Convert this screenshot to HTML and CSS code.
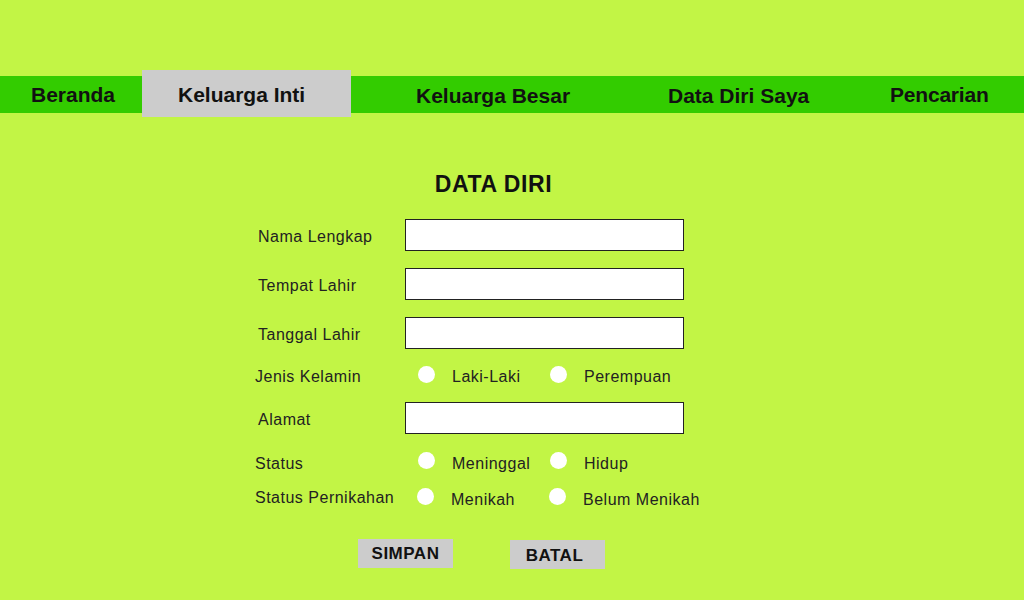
FILE: index.html
```html
<!DOCTYPE html>
<html lang="id">
<head>
<meta charset="utf-8">
<title>Data Diri</title>
<link rel="stylesheet" href="styles.css">
</head>
<body>
<header class="top">
  <nav class="nav">
    <a class="nav-item nav-beranda">Beranda</a>
    <a class="nav-item nav-inti">Keluarga Inti</a>
    <a class="nav-item nav-besar">Keluarga Besar</a>
    <a class="nav-item nav-data">Data Diri Saya</a>
    <a class="nav-item nav-cari">Pencarian</a>
  </nav>
</header>
<main class="main">
  <form class="form">
    <h1 class="title">DATA DIRI</h1>

    <div class="row row-first">
      <label class="label-in">Nama Lengkap</label>
      <input class="field" type="text">
    </div>
    <div class="row">
      <label class="label-in">Tempat Lahir</label>
      <input class="field" type="text">
    </div>
    <div class="row">
      <label class="label-in">Tanggal Lahir</label>
      <input class="field" type="text">
    </div>

    <div class="row">
      <span class="label-r">Jenis Kelamin</span>
      <label class="opt"><input class="radio" type="radio" name="jk"><span class="opt-text">Laki-Laki</span></label>
      <label class="opt"><input class="radio" type="radio" name="jk"><span class="opt-text">Perempuan</span></label>
    </div>

    <div class="row row-alamat">
      <label class="label-in">Alamat</label>
      <input class="field" type="text">
    </div>

    <div class="row row-status">
      <span class="label-r label-status">Status</span>
      <label class="opt"><input class="radio" type="radio" name="st"><span class="opt-text opt-status">Meninggal</span></label>
      <label class="opt"><input class="radio" type="radio" name="st"><span class="opt-text opt-status">Hidup</span></label>
    </div>

    <div class="row row-nikah">
      <span class="label-r label-nikah">Status Pernikahan</span>
      <label class="opt"><input class="radio" type="radio" name="nk"><span class="opt-text opt-low">Menikah</span></label>
      <label class="opt"><input class="radio" type="radio" name="nk"><span class="opt-text opt-low">Belum Menikah</span></label>
    </div>

    <div class="actions">
      <button class="btn" type="button">SIMPAN</button>
      <button class="btn btn-batal" type="button">BATAL</button>
    </div>
  </form>
</main>
</body>
</html>
```
FILE: styles.css
```css
html, body {
  margin: 0;
  padding: 0;
}
body {
  background: #c2f545;
  font-family: "Liberation Sans", Arial, sans-serif;
  color: #222;
  height: 600px;
  overflow: hidden;
}

.top {
  padding-top: 76px;
}
.nav {
  display: flex;
  align-items: center;
  height: 37px;
  background: #33cc00;
}
.nav-item {
  display: flex;
  align-items: center;
  box-sizing: border-box;
  font-weight: bold;
  font-size: 21px;
  line-height: 24px;
  color: #111;
  text-decoration: none;
  white-space: nowrap;
}
.nav-beranda {
  width: 142px;
  padding-left: 31px;
}
.nav-inti {
  width: 209px;
  padding-left: 36px;
  padding-top: 2px;
  align-self: stretch;
  margin: -6px 0 -4px;
  background: #cccccc;
}
.nav-besar {
  width: 317px;
  padding-left: 65px;
  padding-top: 2px;
}
.nav-data {
  width: 222px;
  padding-top: 2px;
}
.nav-cari {
  letter-spacing: -0.2px;
}

.main {
  padding-left: 255px;
}
.form {
  width: 477px;
  margin: 0;
  display: flex;
  flex-direction: column;
}
.title {
  margin: 58px 0 0;
  font-size: 23px;
  line-height: 26px;
  font-weight: bold;
  letter-spacing: 0.6px;
  text-align: center;
  color: #111;
}

.row {
  display: flex;
  align-items: flex-start;
  margin-top: 17px;
  font-size: 16px;
  line-height: 18px;
  letter-spacing: 0.5px;
}
.row-first {
  margin-top: 22px;
}
.row-alamat {
  margin-top: 16px;
}
.row-status {
  margin-top: 18px;
}
.row-nikah {
  margin-top: 15px;
}

.label-in {
  box-sizing: border-box;
  width: 150px;
  padding-left: 3px;
  margin-top: 9px;
  white-space: nowrap;
}
.field {
  box-sizing: border-box;
  width: 279px;
  height: 32px;
  margin: 0;
  padding: 0 4px;
  border: 1px solid #222;
  background: #fff;
  font: inherit;
}

.label-r {
  width: 163px;
  padding-top: 2px;
  white-space: nowrap;
}
.label-status {
  padding-top: 3px;
}
.label-nikah {
  width: 162px;
  padding-top: 1px;
}
.opt {
  display: flex;
  align-items: flex-start;
  width: 132px;
}
.radio {
  -webkit-appearance: none;
  appearance: none;
  width: 17px;
  height: 17px;
  margin: 0;
  border: 0;
  border-radius: 50%;
  background: #fff;
  flex: none;
}
.opt-text {
  margin-left: 17px;
  padding-top: 2px;
  white-space: nowrap;
}
.opt-status {
  padding-top: 3px;
}
.opt-low {
  padding-top: 3px;
}

.actions {
  display: flex;
  align-items: flex-start;
  gap: 57px;
  margin-top: 30px;
  padding-left: 103px;
}
.btn {
  box-sizing: border-box;
  width: 95px;
  height: 29px;
  padding: 0;
  border: 0;
  background: #cccccc;
  font-family: "Liberation Sans", Arial, sans-serif;
  font-weight: bold;
  font-size: 17px;
  line-height: 20px;
  letter-spacing: 0.5px;
  color: #111;
}
.btn-batal {
  margin-top: 1px;
  padding-top: 2px;
  padding-right: 6px;
}
```
